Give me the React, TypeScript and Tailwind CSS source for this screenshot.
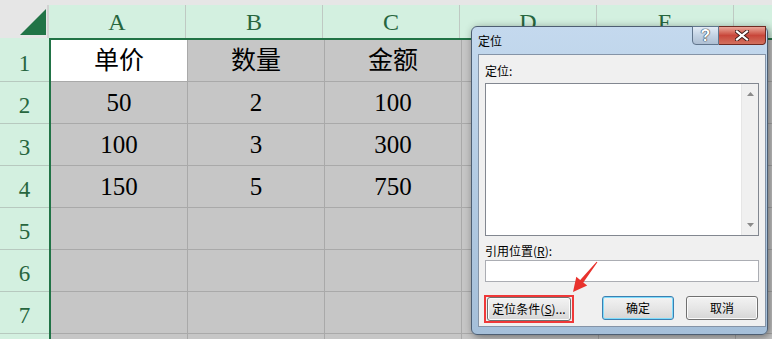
const COLS = ["A", "B", "C", "D", "E", "F"];

const ROWS: Array<Array<string>> = [
  ["单价", "数量", "金额"],
  ["50", "2", "100"],
  ["100", "3", "300"],
  ["150", "5", "750"],
  [],
  [],
  [],
  [],
];

const serif = "font-['Liberation_Serif','Noto_Sans_CJK_SC',serif]";

// -----------------------------------------------------------------------------------------

function Sheet() {
  return (
    <div className="flex flex-col">
      <div className="h-[5px] bg-[#e6e6e6]" />
      {/* column headers */}
      <div className="flex h-[33px]">
        <div className="w-[49px] bg-[#e6e6e6] border-r-2 border-[#d2d2d2] relative shrink-0">
          <svg className="absolute left-[19px] top-[3px]" width="28" height="28" viewBox="0 0 28 28">
            <polygon points="1,27 27,27 27,1" fill="#217346" />
          </svg>
        </div>
        {COLS.map((c) => (
          <div
            key={c}
            className={`w-[137px] shrink-0 bg-[#d3f0e0] border-r border-[#bfc9c3] flex items-end justify-center pb-[1px] text-[#27663e] text-[24px] leading-[30px] ${serif}`}
          >
            {c}
          </div>
        ))}
      </div>
      <div className="flex h-[2px]">
        <div className="w-[49px] bg-[#d3f0e0] shrink-0" />
        <div className="flex-1 bg-[#217346]" />
      </div>
      {ROWS.map((row, ri) => (
        <div key={ri} className="flex h-[42px]">
          <div
            className={`w-[49px] shrink-0 bg-[#d3f0e0] border-b border-[#b7c9bf] flex items-end justify-center pb-[2px] text-[#27663e] text-[23px] leading-[30px] ${serif}`}
          >
            {ri < 7 ? ri + 1 : ""}
          </div>
          <div className="w-[2px] shrink-0 bg-[#217346]" />
          {COLS.map((c, ci) => (
            <div
              key={c}
              className={`w-[137px] shrink-0 border-r border-b border-[#a9a9a9] flex items-center justify-center text-black text-[25px] ${serif} ${
                ri === 0 && ci === 0 ? "bg-white" : "bg-[#c6c6c6]"
              }`}
            >
              {row[ci] ?? ""}
            </div>
          ))}
        </div>
      ))}
    </div>
  );
}

function WinButton({ label, def }: { label: React.ReactNode; def?: boolean }) {
  return (
    <div
      className={`h-[24px] rounded-[3px] border flex items-center justify-center text-[12px] text-black bg-gradient-to-b from-[#f3f3f3] via-[#e6e6e6] to-[#d6d6d6] ${
        def
          ? "border-[#3c7fb1] shadow-[inset_0_0_0_1px_#7fdcfb]"
          : "border-[#707070] shadow-[inset_0_0_0_1px_#fbfbfb]"
      }`}
    >
      {label}
    </div>
  );
}

function Dialog() {
  return (
    <div className="absolute left-[471px] top-[26px] w-[297px] h-[309px] rounded-[6px] border border-[#4d5e72] bg-gradient-to-b from-[#c4d9ee] via-[#b3cbe3] to-[#a5bfd9] shadow-[2px_2px_8px_rgba(0,0,0,0.45)] flex flex-col pl-[6px] pr-[1px] pb-[7px] font-['Noto_Sans_CJK_SC','Liberation_Sans',sans-serif]">
      {/* title bar */}
      <div className="h-[27px] flex items-center text-[12px] text-black relative">
        定位
        <div className="absolute right-0 top-[-1px] flex h-[19px]">
          <div className="w-[27px] rounded-bl-[4px] border border-[#60758c] bg-gradient-to-b from-[#e3ecf6] via-[#c3d3e4] to-[#aebfd3] flex items-center justify-center text-white text-[16px] leading-[16px] font-bold font-['Liberation_Sans',sans-serif] [text-shadow:0_0_1px_#2b3a4b,0_0_1px_#2b3a4b,0_0_1px_#2b3a4b]">
            ?
          </div>
          <div className="w-[47px] rounded-br-[4px] border border-l-0 border-[#6e2a22] bg-gradient-to-b from-[#e9a79b] via-[#c8463a] to-[#d2705e] flex items-center justify-center">
            <svg width="14" height="11" viewBox="0 0 14 11">
              <path d="M2 1.5 L12 9.5 M12 1.5 L2 9.5" stroke="#3b1a16" strokeWidth="4" strokeLinecap="square" />
              <path d="M2 1.5 L12 9.5 M12 1.5 L2 9.5" stroke="#ffffff" strokeWidth="2.2" strokeLinecap="square" />
            </svg>
          </div>
        </div>
      </div>
      {/* client area */}
      <div className="flex-1 bg-[#f0f0f0] border border-[#8594a7] flex flex-col px-[6px] pt-[8px] text-[12px] text-black">
        <div className="h-[15px] leading-[15px]">定位:</div>
        <div className="mt-[5px] h-[153px] border border-[#828790] bg-white flex justify-end">
          <div className="w-[17px] bg-[#f0f0f0] border-l border-[#e6e6e6] flex flex-col justify-between items-center py-[8px]">
            <svg width="7" height="4" viewBox="0 0 7 4">
              <polygon points="0,4 7,4 3.5,0" fill="#8a8a8a" />
            </svg>
            <svg width="7" height="4" viewBox="0 0 7 4">
              <polygon points="0,0 7,0 3.5,4" fill="#8a8a8a" />
            </svg>
          </div>
        </div>
        <div className="mt-[7px] h-[15px] leading-[15px]">
          引用位置(<span className="underline">R</span>):
        </div>
        <div className="mt-[2px] h-[22px] border border-[#abadb3] bg-white" />
        <div className="mt-[13px] flex items-start">
          <div className="w-[90px] ml-[-1px] border-2 border-[#ef3838] px-[1px]">
            <WinButton
              label={
                <span>
                  定位条件(<span className="underline">S</span>)...
                </span>
              }
            />
          </div>
          <div className="ml-[28px] w-[72px] mt-[1px]">
            <WinButton label="确定" def />
          </div>
          <div className="ml-[12px] w-[72px] mt-[1px]">
            <WinButton label="取消" />
          </div>
        </div>
      </div>
    </div>
  );
}

// -----------------------------------------------------------------------------------------

export default function App() {
  return (
    <div className="relative w-[772px] h-[339px] overflow-hidden bg-white">
      <Sheet />
      <Dialog />
      <svg className="absolute left-[560px] top-[255px]" width="45" height="45" viewBox="0 0 45 45">
        <polygon
          points="13,37 16.3,21.7 20.2,24.9 36.6,6.7 37.4,7.3 23.3,27.4 27.2,30.5"
          fill="#e8322d"
        />
      </svg>
    </div>
  );
}
